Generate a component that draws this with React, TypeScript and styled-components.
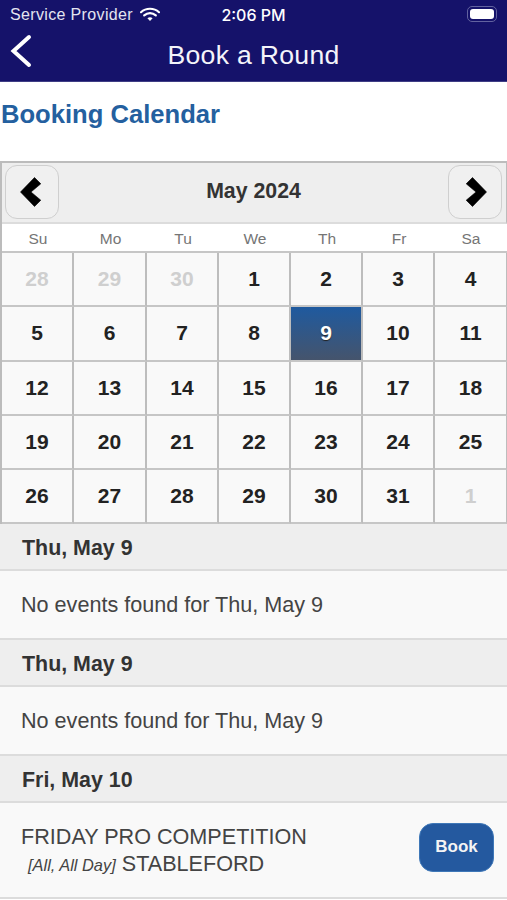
import React from "react";
import styled, { createGlobalStyle } from "styled-components";

const Global = createGlobalStyle`
  html, body { margin: 0; padding: 0; background: #fff; }
  body { font-family: "Liberation Sans", Arial, sans-serif; overflow: hidden; }
`;

const Page = styled.div`
  width: 507px;
  height: 900px;
  overflow: hidden;
  display: flex;
  flex-direction: column;
  background: #fff;
`;

const TopBar = styled.header`
  height: 81px;
  background: #15126a;
  border-bottom: 1px solid #3f3d85;
  display: flex;
  flex-direction: column;
  color: #fff;
  flex: none;
`;

const StatusBar = styled.div`
  height: 28px;
  box-sizing: border-box;
  display: grid;
  grid-template-columns: 1fr auto 1fr;
  align-items: center;
  padding: 2px 6px 0 10px;
  font-size: 16px;
`;

const Carrier = styled.div`
  display: flex;
  align-items: center;
  gap: 7px;
  color: #e4e4f0;
  letter-spacing: 0.35px;
`;

const WifiIcon = styled.svg`
  margin-bottom: 2px;
`;

const Clock = styled.div`
  font-size: 16px;
  font-weight: 500;
  font-family: Inter, "Liberation Sans", sans-serif;
  margin-left: -4px;
`;

const Battery = styled.div`
  justify-self: end;
  width: 30px;
  height: 16px;
  border: 1px solid #62629f;
  border-radius: 5px;
  padding: 2px;
  box-sizing: border-box;
  margin: 0 4px 2px 0;
  &::before {
    content: "";
    display: block;
    width: 100%;
    height: 100%;
    background: #fff;
    border-radius: 3px;
  }
`;

const NavBar = styled.div`
  flex: 1;
  display: grid;
  grid-template-columns: 60px 1fr 60px;
  align-items: center;
`;

const BackLink = styled.div`
  padding: 0 0 8px 10px;
  line-height: 0;
`;

const NavTitle = styled.h1`
  margin: 0;
  padding-top: 2px;
  text-align: center;
  font-size: 26.6px;
  font-weight: 400;
  letter-spacing: 0.3px;
  color: #f4f4fa;
`;

const PageTitle = styled.h2`
  margin: 0;
  height: 79px;
  box-sizing: border-box;
  padding: 17px 0 0 1px;
  font-size: 25.6px;
  line-height: 30px;
  font-weight: 700;
  color: #24609f;
  flex: none;
`;

const Calendar = styled.section`
  flex: none;
  border-top: 2px solid #bcbcbc;
  border-left: 2px solid #bcbcbc;
`;

const MonthBar = styled.div`
  height: 59px;
  box-sizing: content-box;
  background: #eeeeee;
  border-bottom: 2px solid #dcdcdc;
  border-right: 1px solid #bcbcbc;
  display: flex;
  align-items: center;
  justify-content: space-between;
  padding: 0 4px 0 3px;
  & > * { margin-bottom: 2px; }
`;

const MonthLabel = styled.div`
  font-size: 21.3px;
  font-weight: 700;
  color: #333;
`;

const NavButton = styled.div<{ $side: "left" | "right" }>`
  width: 54px;
  height: 54px;
  box-sizing: border-box;
  border: 1px solid #cfcfcf;
  border-radius: 12px;
  background: #f0f0f0;
  display: flex;
  align-items: center;
  justify-content: ${p => (p.$side === "left" ? "flex-start" : "flex-end")};
  padding: ${p => (p.$side === "left" ? "0 0 0 13px" : "0 13px 0 0")};
`;

const WeekRow = styled.div`
  height: 27px;
  display: grid;
  grid-template-columns: 72px 73px repeat(5, 72px);
  align-items: center;
  background: #fff;
  border-bottom: 2px solid #c6c6c6;
`;

const WeekDay = styled.div`
  text-align: center;
  font-size: 15.5px;
  color: #757575;
  padding-top: 3px;
`;

const Grid = styled.div`
  display: grid;
  grid-template-columns: 72px 73px repeat(5, 72px);
  grid-auto-rows: 54.3px;
  background: #f9f9f9;
`;

const Cell = styled.div<{ $muted?: boolean; $active?: boolean; $last?: boolean }>`
  display: flex;
  align-items: center;
  justify-content: center;
  font-size: 21px;
  font-weight: 700;
  box-sizing: border-box;
  border-right: ${p => (p.$last ? "1px solid #bdbdbd" : "2px solid #bdbdbd")};
  border-bottom: 2px solid #c6c6c6;
  color: ${p => (p.$active ? "#fff" : p.$muted ? "#cfcfcf" : "#222")};
  background: ${p => (p.$active ? "linear-gradient(#1f5a9f, #45546c)" : "#f9f9f9")};
  text-shadow: ${p => (p.$active ? "0 1px 1px #222" : "none")};
`;

const DayHeader = styled.div`
  height: 47px;
  box-sizing: border-box;
  padding: 3px 0 0 22px;
  display: flex;
  align-items: center;
  background: #eeeeee;
  border-bottom: 2px solid #dcdcdc;
  font-size: 21.4px;
  font-weight: 700;
  color: #333;
  flex: none;
`;

const EmptyRow = styled.div`
  height: 69px;
  box-sizing: border-box;
  padding-left: 21px;
  display: flex;
  align-items: center;
  background: #f9f9f9;
  border-bottom: 2px solid #dcdcdc;
  font-size: 21.6px;
  color: #444;
  flex: none;
`;

const EventRow = styled.div`
  height: 96px;
  box-sizing: border-box;
  padding: 0 13px 0 21px;
  display: flex;
  align-items: center;
  justify-content: space-between;
  background: #f9f9f9;
  border-bottom: 2px solid #dcdcdc;
  flex: none;
`;

const EventText = styled.div`
  font-size: 21.6px;
  line-height: 27px;
  color: #444;
  padding-top: 1px;
`;

const EventMeta = styled.em`
  font-size: 16.4px;
  margin-left: 7px;
`;

const BookButton = styled.div`
  width: 75px;
  height: 49px;
  box-sizing: border-box;
  border-radius: 14px;
  background: #24599f;
  border: 1px solid #3f78b8;
  color: #f4f4f4;
  font-size: 17px;
  font-weight: 700;
  display: flex;
  align-items: center;
  justify-content: center;
  margin-bottom: 6px;
`;

const weekdays = ["Su", "Mo", "Tu", "We", "Th", "Fr", "Sa"];
const days: { n: number; muted?: boolean }[] = [
  { n: 28, muted: true },
  { n: 29, muted: true },
  { n: 30, muted: true },
  ...Array.from({ length: 31 }, (_, i) => ({ n: i + 1 })),
  { n: 1, muted: true },
];

const Chevron = ({ right }: { right?: boolean }) => (
  <svg width="23" height="32" viewBox="0 0 23 32" style={{ transform: right ? "scaleX(-1)" : undefined }}>
    <path
      d="M1.5 16 L15.5 1.5 L21.8 7.8 L12 16 L21.8 24.2 L15.5 30.5 Z"
      fill="#000"
      stroke="#000"
      strokeWidth="0.6"
      strokeLinejoin="round"
    />
  </svg>
);

export default function App() {
  return (
    <Page>
      <Global />
      <TopBar>
        <StatusBar>
          <Carrier>
            Service Provider
            <WifiIcon width="20" height="15" viewBox="0 0 20 15">
              <path d="M1 5.2 C6 0.6 14 0.6 19 5.2" fill="none" stroke="#fff" strokeWidth="2.2" strokeLinecap="round" />
              <path d="M4.2 8.4 C7.6 5.4 12.4 5.4 15.8 8.4" fill="none" stroke="#fff" strokeWidth="2.2" strokeLinecap="round" />
              <path d="M7.4 11.2 C9 10 11 10 12.6 11.2 L10 14 Z" fill="#fff" />
            </WifiIcon>
          </Carrier>
          <Clock>2:06 PM</Clock>
          <Battery />
        </StatusBar>
        <NavBar>
          <BackLink>
            <svg width="22" height="34" viewBox="0 0 22 34">
              <path d="M19 3 L3.5 17 L19 31" fill="none" stroke="#fff" strokeWidth="4" strokeLinecap="round" strokeLinejoin="miter" />
            </svg>
          </BackLink>
          <NavTitle>Book a Round</NavTitle>
        </NavBar>
      </TopBar>
      <PageTitle>Booking Calendar</PageTitle>
      <Calendar>
        <MonthBar>
          <NavButton $side="left"><Chevron /></NavButton>
          <MonthLabel>May 2024</MonthLabel>
          <NavButton $side="right"><Chevron right /></NavButton>
        </MonthBar>
        <WeekRow>
          {weekdays.map(d => <WeekDay key={d}>{d}</WeekDay>)}
        </WeekRow>
        <Grid>
          {days.map((d, i) => (
            <Cell key={i} $muted={d.muted} $active={!d.muted && d.n === 9} $last={i % 7 === 6}>
              {d.n}
            </Cell>
          ))}
        </Grid>
      </Calendar>
      <DayHeader>Thu, May 9</DayHeader>
      <EmptyRow>No events found for Thu, May 9</EmptyRow>
      <DayHeader>Thu, May 9</DayHeader>
      <EmptyRow>No events found for Thu, May 9</EmptyRow>
      <DayHeader>Fri, May 10</DayHeader>
      <EventRow>
        <EventText>
          FRIDAY PRO COMPETITION
          <br />
          <EventMeta>[All, All Day]</EventMeta> STABLEFORD
        </EventText>
        <BookButton>Book</BookButton>
      </EventRow>
    </Page>
  );
}
